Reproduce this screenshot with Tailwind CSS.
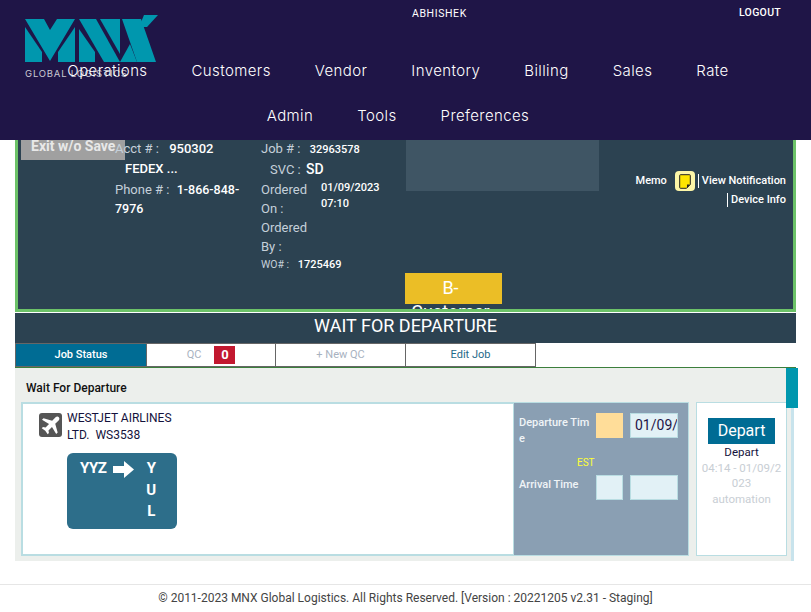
<!DOCTYPE html>
<html lang="en">

<head>
    <meta charset="UTF-8">
    <meta name="viewport" content="width=device-width, initial-scale=1.0">
    <script src="https://cdn.jsdelivr.net/npm/@tailwindcss/browser@4"></script>
    <title>Wait For Departure</title>
</head>

<body class="relative h-[612px] w-[811px] overflow-hidden bg-white [font-family:Roboto,sans-serif]">
    <!-- header -->
    <header class="relative h-[140px] bg-[#1f1547] text-white">
        <svg class="absolute left-0 top-0" width="170" height="70" viewBox="0 0 170 70" fill="#0097ae">
            <polygon points="25,27 42,52 42,62 25,62" />
            <polygon points="25,19 44,19 50,30 57,19 75,19 50,61" />
            <polygon points="75,27 58,52 58,62 75,62" />
            <polygon points="79,29 95,52 95,62 79,62" />
            <polygon points="79,19 96,19 120,62 104,62" />
            <polygon points="100,19 120,19 120,54" />
            <polygon points="122,19 141,19 156,62 137,62" />
            <polygon points="120,62 130,44 137,62" />
            <polygon points="144,15 158,15 147,27 139,27" />
        </svg>
        <span class="absolute left-[25px] top-[67px] text-[9.5px] leading-[13px] tracking-[0.8px] text-[#c9c9d2] [font-family:Inter,sans-serif]">GLOBAL LOGISTICS</span>

        <div class="relative flex h-[60px] items-start pl-[412px] pr-[30px] text-[10.5px] tracking-[0.3px]">
            <span class="mt-[8px] leading-3 tracking-[0.6px]">ABHISHEK</span>
            <span class="ml-auto mt-[7px] font-medium leading-3">LOGOUT</span>
        </div>
        <nav class="relative ml-[48px] flex w-[700px] flex-wrap justify-center gap-x-[44px] gap-y-[23px] text-[15px] font-light leading-[22px] tracking-[0.4px] [font-family:Inter,sans-serif]">
            <a>Operations</a>
            <a>Customers</a>
            <a>Vendor</a>
            <a>Inventory</a>
            <a>Billing</a>
            <a>Sales</a>
            <a>Rate</a>
            <a>Admin</a>
            <a>Tools</a>
            <a>Preferences</a>
        </nav>
    </header>

    <main class="px-[15px]">
        <!-- job summary -->
        <section class="relative flex h-[172px] overflow-hidden border-x-[3px] border-b-[3px] border-[#6cc268] bg-[#2c4251] pl-[97px] text-[13px] leading-[19px] text-[#c5d0da]">
            <button class="absolute left-[3px] top-0 h-5 w-[104px] bg-[#a0a0a0] pb-[8px] pl-[10px] text-left text-[14px] font-bold leading-[12px] text-[#e8e8e8]">Exit w/o Save</button>

            <div class="relative w-[146px] shrink-0">
                <p class="h-[20px] leading-[17px]">Acct # : <span class="ml-[7px] font-medium text-white">950302</span></p>
                <p class="h-[20px] pl-[10px] leading-[17px] font-medium text-white">FEDEX ...</p>
                <p class="pr-[15px]">Phone # : <span class="ml-1 text-[12.5px] font-medium text-white">1-866-848-7976</span></p>
            </div>

            <div class="w-[145px] shrink-0">
                <p class="h-[20px] leading-[18px]">Job # : <span class="ml-[6px] text-[11px] font-medium text-white">32963578</span></p>
                <p class="h-[20px] pl-[9px] leading-[18px]">SVC : <span class="ml-[2px] text-[14px] font-medium text-white">SD</span></p>
                <div class="flex">
                    <p class="w-[60px]">Ordered On :</p>
                    <p class="text-[11px] font-medium leading-4 text-white">01/09/2023<br>07:10</p>
                </div>
                <p class="w-[60px]">Ordered By :</p>
                <p class="text-[10.5px] leading-[18px]">WO# : <span class="ml-[6px] text-[11px] font-medium text-white">1725469</span></p>
            </div>

            <div class="w-[193px] shrink-0">
                <div class="h-[51px] bg-[#3f5564]"></div>
                <div class="ml-[-1px] mt-[82px] h-[31px] w-[97px] bg-[#ebbe26] pr-[6px] pt-[3px] text-center text-[18px] leading-6 text-white">B-<br>Customer</div>
            </div>

            <div class="flex flex-1 flex-col items-end pr-[7px] pt-[31px] text-[11px] font-medium leading-[14px] text-white">
                <div class="flex items-center">
                    <span class="mr-2">Memo</span>
                    <span class="flex h-5 w-5 items-center justify-center rounded-[4px] bg-[#fdf6a8]">
                        <svg width="12" height="15" viewBox="0 0 12 15">
                            <path d="M1.5 .7H10.5Q11.3 .7 11.3 1.5V10.5L7.500 14.300H1.500Q.7 14.300 .7 13.500V1.500Q.7 .7 1.500 .7Z" fill="#ffe600" stroke="#222" stroke-width="1" />
                            <path d="M11 10.500H8V14Z" fill="#222" />
                        </svg>
                    </span>
                    <span class="ml-[3px] border-l border-white pl-[3px]">View Notification</span>
                </div>
                <span class="mt-[2px] border-l border-white pl-[3px]">Device Info</span>
            </div>
        </section>

        <h1 class="mt-px h-[30px] bg-[#2c4251] text-center text-[18px] leading-[26px] text-white">WAIT FOR DEPARTURE</h1>

        <!-- tabs -->
        <div class="flex h-[25px] border-b border-[#3c7f3c] text-[11px] leading-[22px]">
            <span class="w-[131px] border border-r-0 border-[#666] bg-[#006c94] text-center font-medium text-white">Job Status</span>
            <span class="flex w-[129px] items-center justify-center gap-[13px] border border-r-0 border-[#666] text-[#a8b2bf]">QC <b class="flex h-[18px] w-[21px] items-center justify-center bg-[#c2182f] text-[13px] text-white">0</b></span>
            <span class="w-[130px] border border-r-0 border-[#666] text-center text-[#a8b2bf]">+ New QC</span>
            <span class="w-[131px] border border-[#666] text-center text-[#1f6a8a]">Edit Job</span>
        </div>

        <!-- status section -->
        <section class="relative mr-[5px] h-[193px] bg-[#ecefec] pl-[6px]">
            <h2 class="h-[34px] pl-[5px] pt-[13px] text-[12px] font-medium leading-[14px] text-[#111]">Wait For Departure</h2>
            <div class="flex h-[154px]">
                <div class="flex w-[492px] border-2 border-r-0 border-[#b9dde2] bg-white pl-[16px] pt-[6px]">
                    <span class="mt-[3px] flex h-[24px] w-[23px] items-center justify-center rounded-[3px] bg-[#555]">
                        <svg width="21" height="21" viewBox="0 0 24 24" fill="#fff">
                            <path d="M21.500 2.500c-1-1-2.700-.8-3.700.2L13.900 6.600 4 3.800 2.300 5.500l8 4.800-3.900 4-3-.5L2 15.200l4 2.800 2.800 4 1.400-1.400-.5-3 4-3.900 4.800 8 1.700-1.700-2.800-9.900 3.900-3.900c1-1 1.200-2.700.2-3.700z" />
                        </svg>
                    </span>
                    <div class="ml-[5px] w-[112px]">
                        <p class="text-[12px] leading-[17px] text-[#14123c]">WESTJET AIRLINES LTD.&nbsp; WS3538</p>
                        <div class="mt-[9px] flex h-[76px] w-[110px] rounded-[6px] bg-[#2d6e8a] pl-[13px] pt-[5px] text-[15px] font-bold leading-[21.5px] text-white">
                            <span class="tracking-[-0.5px]">YYZ</span>
                            <svg class="ml-[7px] mt-[3px]" width="21" height="17" viewBox="0 0 21 17" fill="#fff"><path d="M0 5h11V0l10 8.500L11 17v-5H0z" /></svg>
                            <span class="ml-[12px] w-[10px] text-center">Y<br>U<br>L</span>
                        </div>
                    </div>
                </div>

                <div class="w-[176px] border border-[#b9dde2] bg-[#8a9fb3] pl-[5px] text-[11px] font-medium leading-4 text-[#f0f4f7]">
                    <div class="mt-[10px] flex">
                        <p class="mt-[2px] w-[72px] break-all">Departure Time</p>
                        <span class="ml-[5px] h-[25px] w-[27px] bg-[#ffdd99]"></span>
                        <span class="ml-[7px] h-[25px] w-[48px] overflow-hidden whitespace-nowrap border border-[#b9dde2] bg-[#e2f1f6] pl-[4px] text-[14px] font-normal leading-[23px] text-[#1f1547]">01/09/</span>
                    </div>
                    <p class="ml-[58px] mt-[10px] text-[10px] font-normal leading-3 text-[#ffff33]">EST</p>
                    <div class="mt-[6px] flex">
                        <p class="mt-[2px] w-[72px]">Arrival Time</p>
                        <span class="ml-[5px] h-[25px] w-[27px] border border-[#b9dde2] bg-[#e2f1f6]"></span>
                        <span class="ml-[7px] h-[25px] w-[48px] border border-[#b9dde2] bg-[#e2f1f6]"></span>
                    </div>
                </div>

                <div class="ml-[7px] w-[91px] border border-[#b9dde2] bg-white px-[4px] pt-[15px] text-center text-[11.5px] leading-[15.5px]">
                    <button class="mx-auto block h-[26px] w-[67px] bg-[#006c94] text-[16px] leading-[24px] text-white">Depart</button>
                    <p class="mt-px text-[#14123c]">Depart</p>
                    <p class="break-all text-[#c8ced4]">04:14 - 01/09/2023</p>
                    <p class="text-[#c8ced4]">automation</p>
                </div>
            </div>
            <span class="absolute left-[771px] top-0 h-10 w-3 bg-[#0097ae]"></span>
            <span class="absolute left-[776px] top-10 h-[153px] w-[3px] bg-[#c8e3ec]"></span>
        </section>
    </main>

    <footer class="mt-[23px] h-[28px] border-t border-[#e6e6e6] pt-[5px] text-center text-[12px] leading-4 text-[#444]">© 2011-2023 MNX Global Logistics. All Rights Reserved. [Version : 20221205 v2.31 - Staging]</footer>
</body>

</html>
